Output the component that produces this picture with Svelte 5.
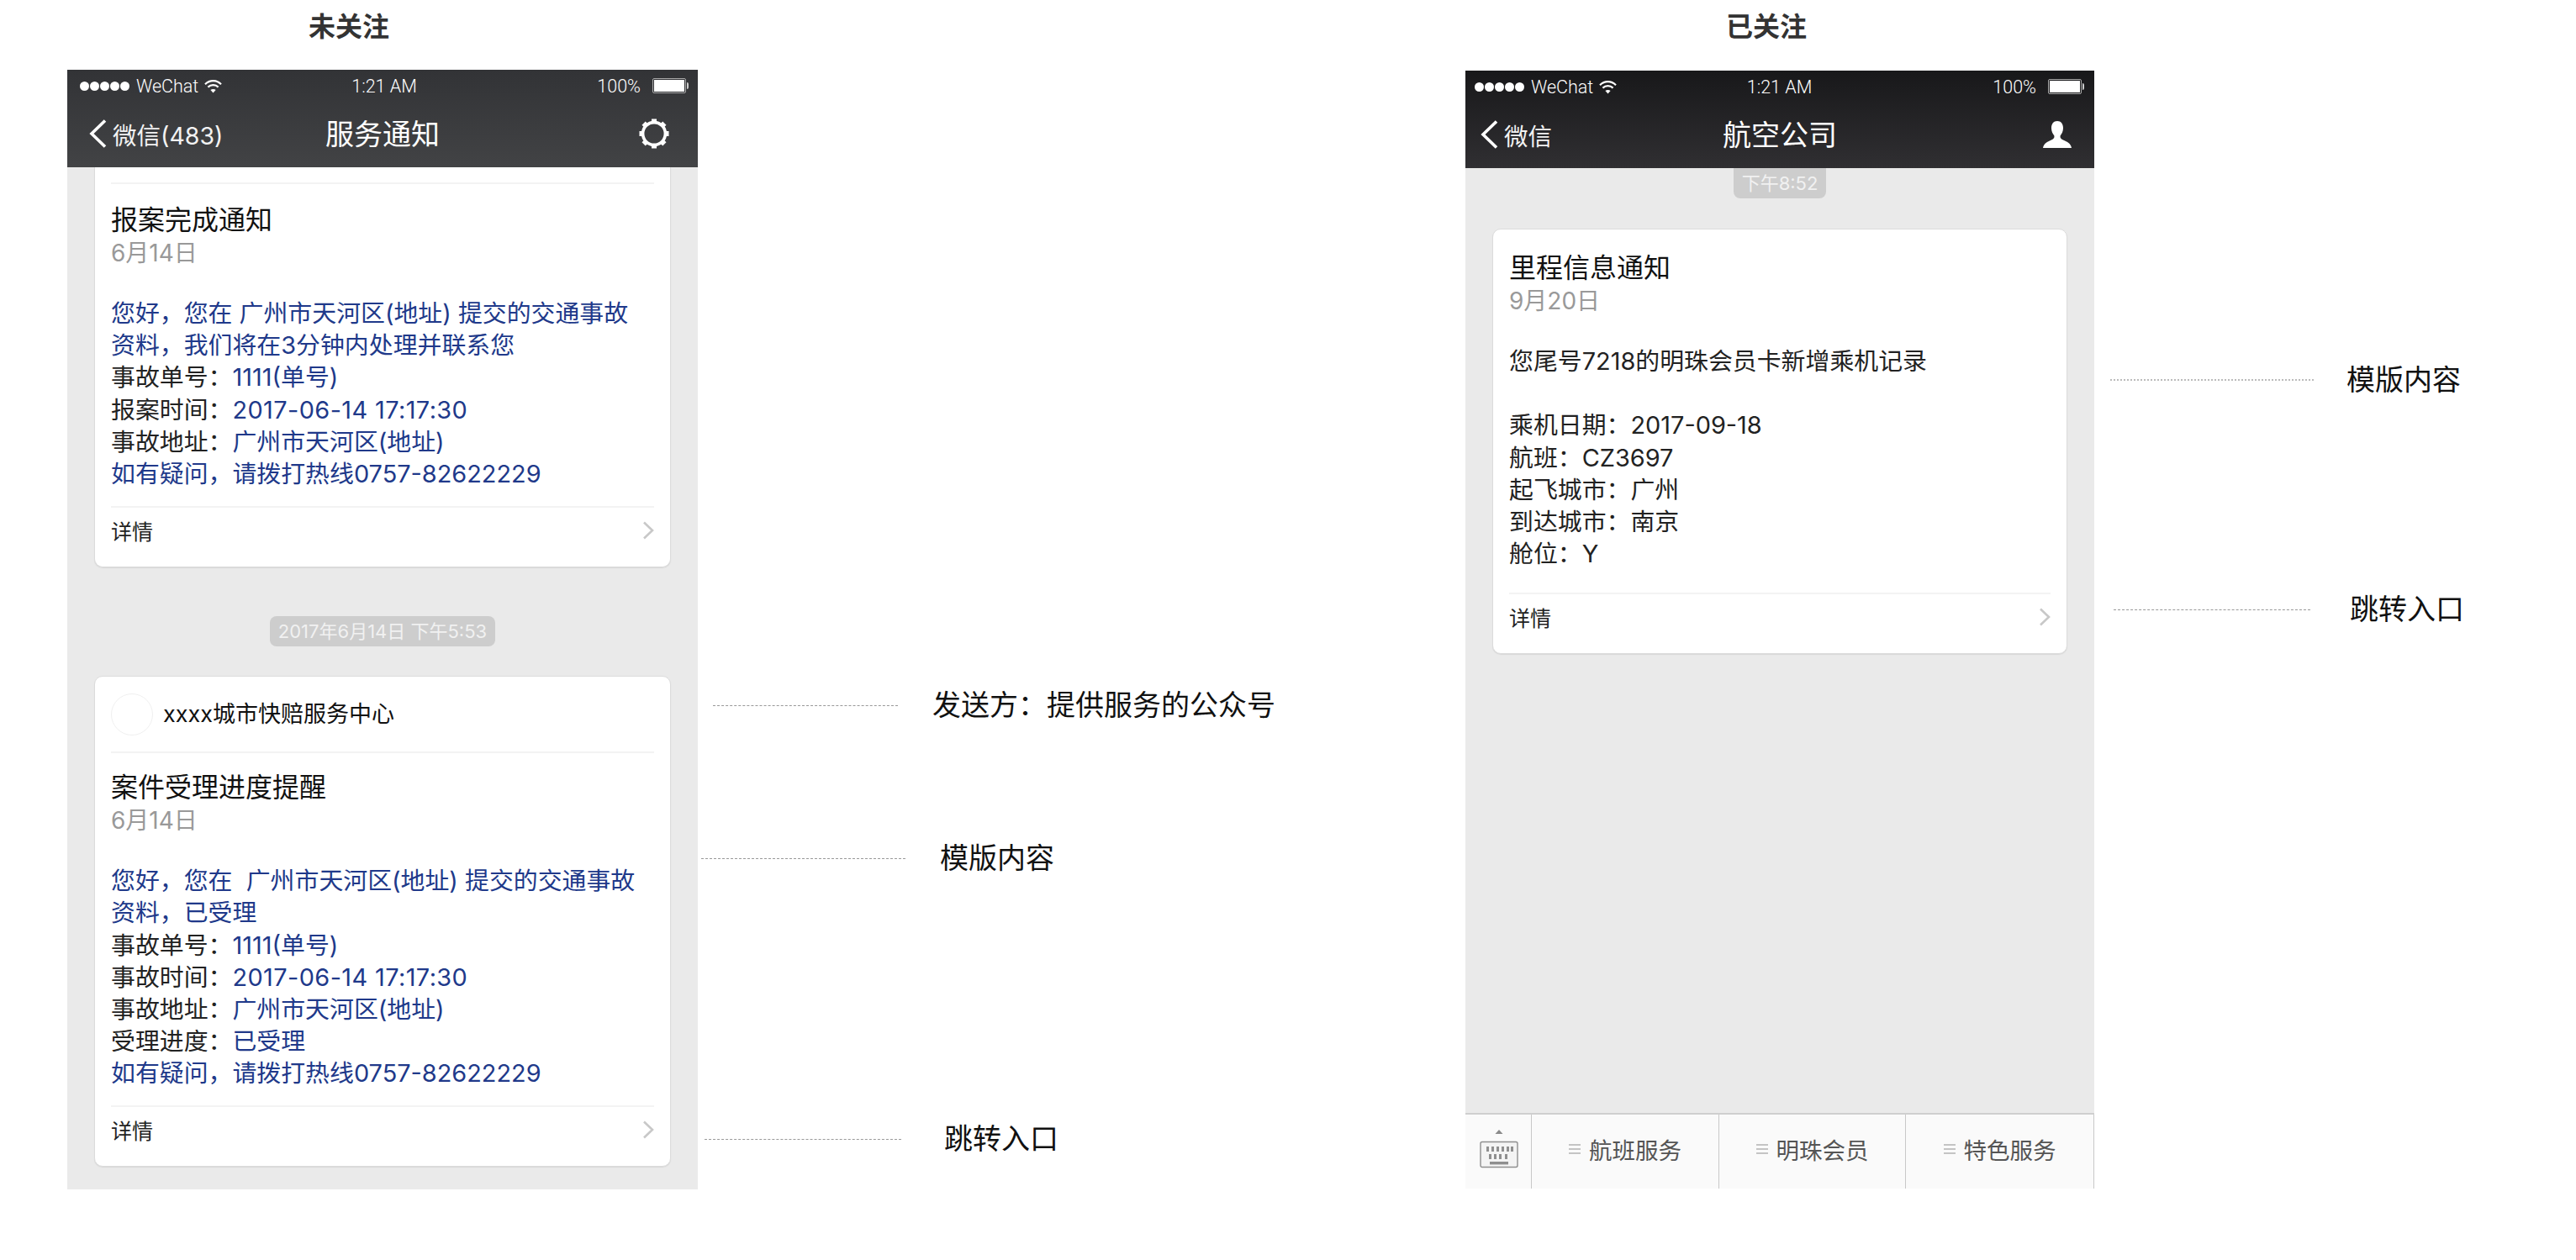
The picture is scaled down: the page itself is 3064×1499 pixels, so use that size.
<script>
  const noticeLines = [
    [{ t: "您好，您在 广州市天河区(地址) 提交的交通事故", b: true }],
    [{ t: "资料，我们将在3分钟内处理并联系您", b: true }],
    [{ t: "事故单号：" }, { t: "1111(单号)", b: true }],
    [{ t: "报案时间：" }, { t: "2017-06-14 17:17:30", b: true, w: true }],
    [{ t: "事故地址：" }, { t: "广州市天河区(地址)", b: true }],
    [{ t: "如有疑问，请拨打热线0757-82622229", b: true }],
  ];
  const progressLines = [
    [{ t: "您好，您在  广州市天河区(地址) 提交的交通事故", b: true }],
    [{ t: "资料，已受理", b: true }],
    [{ t: "事故单号：" }, { t: "1111(单号)", b: true }],
    [{ t: "事故时间：" }, { t: "2017-06-14 17:17:30", b: true, w: true }],
    [{ t: "事故地址：" }, { t: "广州市天河区(地址)", b: true }],
    [{ t: "受理进度：" }, { t: "已受理", b: true }],
    [{ t: "如有疑问，请拨打热线0757-82622229", b: true }],
  ];
  const mileLines = [
    [{ t: "您尾号7218的明珠会员卡新增乘机记录" }],
    [],
    [{ t: "乘机日期：2017-09-18" }],
    [{ t: "航班：CZ3697" }],
    [{ t: "起飞城市：广州" }],
    [{ t: "到达城市：南京" }],
    [{ t: "舱位：Y" }],
  ];
  const leftNotes = [
    { top: 819, indent: 18, line: 220, gap: 41, text: "发送方：提供服务的公众号" },
    { top: 142, indent: 4, line: 243, gap: 41, text: "模版内容" },
    { top: 294, indent: 8, line: 234, gap: 51, text: "跳转入口" },
  ];
  const rightNotes = [
    { top: 432, indent: 17, line: 242, gap: 39, text: "模版内容", dotted: true },
    { top: 233, indent: 21, line: 234, gap: 47, text: "跳转入口" },
  ];
  const menus = ["航班服务", "明珠会员", "特色服务"];
  const teeth = [0, 45, 90, 135, 180, 225, 270, 315];
</script>

{#snippet statusBar()}
  <div class="status">
    <div class="carrier">
      <span class="dots"><i></i><i></i><i></i><i></i><i></i></span>
      <span>WeChat</span>
      <svg width="21" height="17" viewBox="0 0 21 17" fill="none" stroke="#fff" stroke-width="2.2">
        <path d="M1 6.2C6.5 .8 14.5 .8 20 6.2" />
        <path d="M4.4 9.6C7.9 6.4 13.1 6.4 16.6 9.6" />
        <path d="M10.5 16.6L7.4 13C9.2 11.5 11.8 11.5 13.6 13Z" fill="#fff" stroke="none" />
      </svg>
    </div>
    <div class="clock">1:21 AM</div>
    <div class="power">
      <span>100%</span>
      <span class="battery"><b></b></span>
    </div>
  </div>
{/snippet}

{#snippet chevronBack()}
  <svg class="back-icon" width="21" height="34" viewBox="0 0 21 34" fill="none" stroke="#fff" stroke-width="3.6">
    <path d="M19 1.5L3 17L19 32.5" />
  </svg>
{/snippet}

{#snippet textLines(lines)}
  <div class="body">
    {#each lines as line}
      <div class="row">
        {#each line as part}<span class:blue={part.b} class:wide={part.w}>{part.t}</span>{/each}
      </div>
    {/each}
  </div>
{/snippet}

{#snippet cardFooter()}
  <div class="foot">
    <span>详情</span>
    <svg width="14" height="22" viewBox="0 0 14 22" fill="none" stroke="#c8c8c8" stroke-width="2.6">
      <path d="M2 1.5L12 11L2 20.5" />
    </svg>
  </div>
{/snippet}

{#snippet noteList(notes)}
  <div class="notes">
    {#each notes as n}
      <div class="note" style="margin-top:{n.top}px;padding-left:{n.indent}px">
        <span class="rule" class:dotted={n.dotted} style="width:{n.line}px;margin-right:{n.gap}px"></span>
        <span class="label">{n.text}</span>
      </div>
    {/each}
  </div>
{/snippet}

<div class="page">
  <section class="side first">
    <div class="col">
      <h2 class="head-a">未关注</h2>
      <div class="phone tall">
        <div class="bar grey">
          {@render statusBar()}
          <div class="nav">
            <div class="nav-left">{@render chevronBack()}<span>微信(483)</span></div>
            <div class="nav-title">服务通知</div>
            <div class="nav-right">
              <svg class="gear" width="36" height="36" viewBox="0 0 36 36" fill="none">
                <circle cx="18" cy="18" r="13.4" stroke="#fff" stroke-width="3.6" />
                {#each teeth as a}
                  <rect x="15" y="0.5" width="6" height="5" fill="#fff" transform="rotate({a} 18 18)" />
                {/each}
              </svg>
            </div>
          </div>
        </div>
        <div class="chat">
          <div class="card clipped">
            <div class="stub"></div>
            <div class="main pad-a">
              <h3>报案完成通知</h3>
              <div class="date">6月14日</div>
              {@render textLines(noticeLines)}
            </div>
            {@render cardFooter()}
          </div>
          <div class="pill mid">2017年6月14日 下午5:53</div>
          <div class="card">
            <div class="sender">
              <span class="avatar"></span>
              <span class="sender-name">xxxx城市快赔服务中心</span>
            </div>
            <div class="main pad-b">
              <h3>案件受理进度提醒</h3>
              <div class="date">6月14日</div>
              {@render textLines(progressLines)}
            </div>
            {@render cardFooter()}
          </div>
        </div>
      </div>
    </div>
    {@render noteList(leftNotes)}
  </section>

  <section class="side">
    <div class="col">
      <h2 class="head-b">已关注</h2>
      <div class="phone short">
        <div class="bar dark">
          {@render statusBar()}
          <div class="nav">
            <div class="nav-left">{@render chevronBack()}<span>微信</span></div>
            <div class="nav-title">航空公司</div>
            <div class="nav-right">
              <svg class="person" width="34" height="32" viewBox="0 0 34 32" fill="#fff">
                <path d="M17 0C12.6 0 10 3.4 10 8.2C10 12 11.5 15 13.4 17.4C13.9 20 12.6 21.2 9.5 22.8C5.4 24.8 1 26.4 0 32H34C33 26.4 28.6 24.8 24.5 22.8C21.4 21.2 20.1 20 20.6 17.4C22.5 15 24 12 24 8.2C24 3.4 21.4 0 17 0Z" />
              </svg>
            </div>
          </div>
        </div>
        <div class="chat">
          <div class="pill top">下午8:52</div>
          <div class="card">
            <div class="main pad-c">
              <h3>里程信息通知</h3>
              <div class="date">9月20日</div>
              {@render textLines(mileLines)}
            </div>
            {@render cardFooter()}
          </div>
        </div>
        <div class="menu">
          <div class="kb">
            <svg width="46" height="46" viewBox="0 0 46 46" fill="none">
              <path d="M23 0L27.5 5H18.5Z" fill="#8a8a8a" />
              <rect x="1" y="14.5" width="44" height="30" rx="2" stroke="#8f8f8f" stroke-width="1.4" fill="#f4f4f4" />
              <g fill="#8f8f8f">
                <rect x="8" y="20" width="3" height="6" /><rect x="14" y="20" width="3" height="6" />
                <rect x="20" y="20" width="3" height="6" /><rect x="26" y="20" width="3" height="6" />
                <rect x="32" y="20" width="3" height="6" /><rect x="37" y="20" width="3" height="6" />
                <rect x="11" y="29" width="3" height="6" /><rect x="17" y="29" width="3" height="6" />
                <rect x="23" y="29" width="3" height="6" /><rect x="30" y="29" width="3" height="6" />
                <rect x="12" y="38" width="22" height="3.4" />
              </g>
            </svg>
          </div>
          {#each menus as m}
            <div class="cell">
              <span class="lines"><i></i><i></i><i></i></span>
              <span>{m}</span>
            </div>
          {/each}
        </div>
      </div>
    </div>
    {@render noteList(rightNotes)}
  </section>
</div>

<style>
  :global(body) {
    margin: 0;
    background: #fff;
  }

  .page {
    display: flex;
    width: 3064px;
    height: 1499px;
    overflow: hidden;
    padding-left: 80px;
    box-sizing: border-box;
    font-family: Inter, "Noto Sans CJK SC", sans-serif;
    color: #111;
  }

  .side {
    display: flex;
    flex: none;
  }
  .side.first {
    width: 1663px;
  }
  .col {
    width: 750px;
    flex: none;
  }

  h2 {
    margin: 0;
    font-size: 32px;
    line-height: 64px;
    font-weight: 700;
    color: #333;
  }
  .head-a {
    height: 83px;
    padding-left: 287px;
  }
  .head-b {
    height: 84px;
    padding-left: 310px;
  }

  .phone {
    display: flex;
    flex-direction: column;
    width: 750px;
    background: #eaeaea;
    overflow: hidden;
  }
  .phone.tall {
    height: 1332px;
  }
  .phone.short {
    width: 748px;
    height: 1330px;
  }

  .bar {
    height: 116px;
    flex: none;
    color: #fff;
  }
  .bar.grey {
    background: linear-gradient(#323336, #424345);
  }
  .bar.dark {
    background: linear-gradient(#18181a, #302f32);
  }

  .status {
    display: grid;
    grid-template-columns: 1fr auto 1fr;
    align-items: center;
    height: 38px;
    padding: 0 11px 0 15px;
    font-family: Roboto, sans-serif;
    font-weight: 300;
    font-size: 21.5px;
  }
  .dark .status {
    padding: 0 12px 0 11px;
  }
  .carrier {
    display: flex;
    align-items: center;
    gap: 7px;
  }
  .dots {
    display: flex;
  }
  .dots i {
    width: 11px;
    height: 11px;
    margin-right: 1px;
    border-radius: 50%;
    background: #fff;
  }
  .power {
    display: flex;
    align-items: center;
    justify-content: flex-end;
    gap: 14px;
  }
  .battery {
    position: relative;
    display: block;
    width: 40px;
    height: 18px;
    box-sizing: border-box;
    border: 1px solid #aaa;
    border-radius: 2px;
    padding: 1px;
    margin-right: 3px;
  }
  .battery b {
    display: block;
    height: 100%;
    background: #fff;
  }
  .battery::after {
    content: "";
    position: absolute;
    right: -4px;
    top: 4px;
    width: 2px;
    height: 8px;
    background: #ccc;
    border-radius: 0 2px 2px 0;
  }

  .nav {
    display: grid;
    grid-template-columns: 1fr auto 1fr;
    align-items: center;
    height: 78px;
    box-sizing: border-box;
    padding: 0 26px 2px;
  }
  .dark .nav {
    padding: 0 18px 2px;
  }
  .nav-left {
    display: flex;
    align-items: center;
    gap: 7px;
    font-size: 28.5px;
    color: #f2f2f2;
  }
  .nav-title {
    font-size: 34px;
    font-weight: 400;
    padding-bottom: 3px;
  }
  .nav-right {
    display: flex;
    justify-content: flex-end;
  }
  .gear {
    margin-right: 8px;
  }
  .person {
    margin-right: 9px;
  }
  svg {
    display: block;
    flex: none;
  }

  .chat {
    flex: 1;
    min-height: 0;
  }

  .card {
    margin: 0 32px;
    padding: 0 19px;
    background: #fff;
    border: 1px solid #dcdcdc;
    border-radius: 10px;
    box-shadow: 0 1px 1px #d8d8d8;
  }
  .card.clipped {
    border-top: none;
    border-radius: 0 0 10px 10px;
  }
  .stub {
    height: 18px;
    border-bottom: 2px solid #f3f3f3;
  }

  .sender {
    display: flex;
    align-items: center;
    gap: 12px;
    height: 89px;
    font-size: 27px;
    border-bottom: 2px solid #f3f3f3;
  }
  .sender-name {
    padding-bottom: 4px;
  }
  .avatar {
    width: 48px;
    height: 48px;
    border: 1px solid #f0f0f0;
    border-radius: 50%;
  }

  .main.pad-a {
    padding-top: 23px;
  }
  .main.pad-b {
    padding-top: 21px;
  }
  .main.pad-c {
    padding-top: 26px;
    padding-bottom: 8px;
  }

  h3 {
    margin: 0;
    font-size: 32px;
    line-height: 40px;
    font-weight: 400;
    color: #111;
  }
  .date {
    font-size: 28px;
    line-height: 38px;
    color: #999;
  }
  .body {
    margin-top: 34px;
    margin-bottom: 19px;
    font-size: 28.9px;
    color: #222;
  }
  .row {
    height: 38.2px;
    line-height: 38.2px;
    white-space: pre;
  }
  .blue {
    color: #20398a;
  }
  .wide {
    letter-spacing: 0.4px;
  }

  .foot {
    display: flex;
    align-items: center;
    justify-content: space-between;
    height: 54px;
    padding-bottom: 16px;
    border-top: 2px solid #f3f3f3;
    font-size: 25px;
    color: #222;
  }

  .pill {
    width: fit-content;
    height: 36px;
    line-height: 36px;
    margin: 0 auto 35px;
    padding: 0 10px;
    border-radius: 8px;
    background: #cdcdcd;
    color: #f1f1f1;
    font-size: 22px;
  }
  .pill.mid {
    margin-top: 58px;
  }
  .pill.top {
    margin: 0 auto 36px;
    border-radius: 0 0 8px 8px;
  }

  .menu {
    display: grid;
    grid-template-columns: 79px 223px 222px 224px;
    flex: none;
    height: 90px;
    box-sizing: border-box;
    border-top: 2px solid #cfcfcf;
    background: #fafafa;
  }
  .menu > div {
    box-sizing: border-box;
    border-right: 1px solid #c8c8c8;
  }
  .kb {
    display: flex;
    justify-content: center;
    padding: 18px 0 0 2px;
  }
  .cell {
    display: flex;
    align-items: center;
    justify-content: center;
    gap: 10px;
    padding-bottom: 6px;
    font-size: 27.5px;
    color: #555;
  }
  .lines {
    display: flex;
    flex-direction: column;
    gap: 3px;
  }
  .lines i {
    display: block;
    width: 14px;
    height: 2px;
    background: #c4c4c4;
  }

  .notes {
    flex: none;
  }
  .note {
    display: flex;
    align-items: center;
    height: 40px;
    font-size: 34px;
    color: #111;
    white-space: nowrap;
  }
  .label {
    padding-bottom: 5px;
  }
  .rule {
    display: block;
    height: 0;
    border-top: 1px dashed #999;
  }
  .rule.dotted {
    border-top: 2px dotted #bbb;
  }
</style>
